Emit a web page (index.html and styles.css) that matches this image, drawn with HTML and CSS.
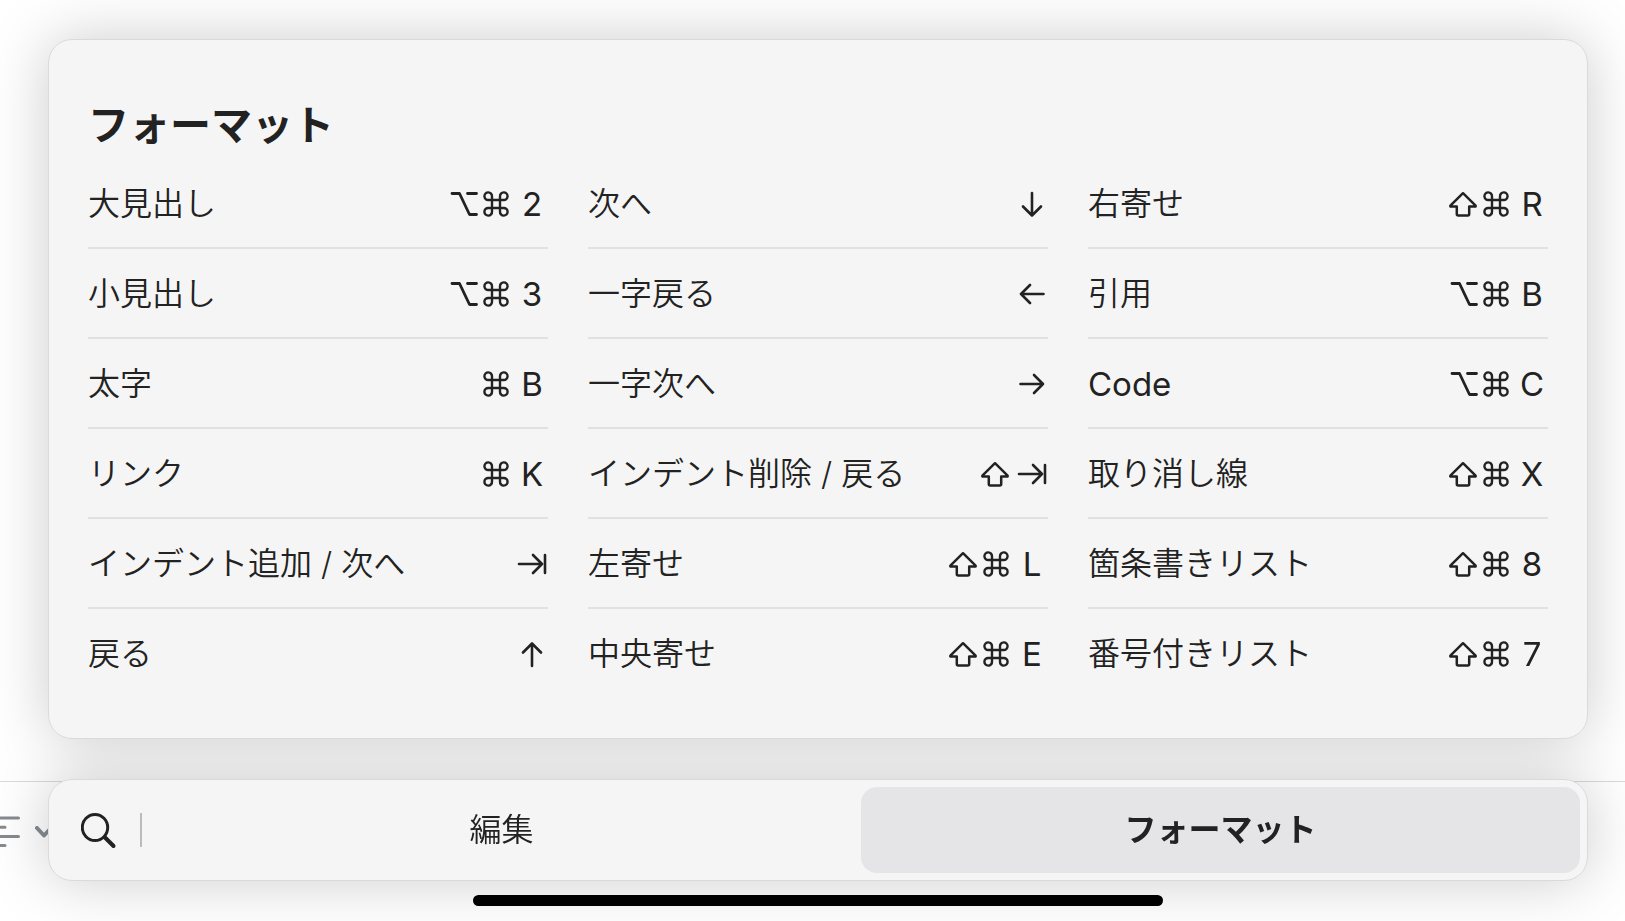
FILE: index.html
```
<!DOCTYPE html>
<html lang="ja">
<head>
  <meta charset="UTF-8" />
  <title>フォーマット</title>
  <meta name="viewport" content="width=device-width, initial-scale=1.0"/>
  <link rel="stylesheet" href="styles.css">
</head>
<body>
  <!-- key symbols -->
  <svg class="sprite" aria-hidden="true">
    <symbol id="cmd" viewBox="0 0 32 32">
      <path stroke-width="2.400" d="M12 12V8.500A3.800 3.800 0 1 0 8.500 12H23.500A3.800 3.800 0 1 0 20 8.500V23.500A3.800 3.800 0 1 0 23.500 20H8.500A3.800 3.800 0 1 0 12 23.500Z"/>
    </symbol>
    <symbol id="opt" viewBox="0 0 32 32">
      <path stroke-width="2.800" d="M4 5.500H11.500L21.500 26.500H28.500M19.500 5.500H28.500"/>
    </symbol>
    <symbol id="shift" viewBox="0 0 32 32">
      <path stroke-width="2.500" d="M15 5.200L27.600 17.600Q28 18.600 27 18.600H21.200V26Q21.200 27.400 19.800 27.400H10.200Q8.800 27.400 8.800 26V18.600H3Q2 18.600 2.400 17.600Z"/>
    </symbol>
    <symbol id="down" viewBox="0 0 32 32">
      <path stroke-width="2.600" d="M16 5V27.500M7 18.500L16 27.500L25 18.500"/>
    </symbol>
    <symbol id="up" viewBox="0 0 32 32">
      <path stroke-width="2.600" d="M16 28V5.500M7 14.500L16 5.500L25 14.500"/>
    </symbol>
    <symbol id="left" viewBox="0 0 32 32">
      <path stroke-width="2.600" d="M27.500 16H5M14 7L5 16L14 25"/>
    </symbol>
    <symbol id="right" viewBox="0 0 32 32">
      <path stroke-width="2.600" d="M4.500 16H27M18 7L27 16L18 25"/>
    </symbol>
    <symbol id="tab" viewBox="0 0 32 32">
      <path stroke-width="2.600" d="M3 16H26M17 7L26 16L17 25M29 7V25"/>
    </symbol>
  </svg>

  <div class="toolbar">
    <button class="tool" aria-label="配置">
      <svg width="21" height="32" viewBox="0 0 21 32"><path d="M0 3H18.500M0 12.200H5M0 21.400H18.500M0 30.500H5"/></svg>
    </button>
    <button class="tool chevron" aria-label="メニュー">
      <svg width="18" height="12" viewBox="0 0 18 12"><path d="M2 2L9 9.500L16 2"/></svg>
    </button>
  </div>

  <div class="overlay">
    <main class="panel">
      <h1>フォーマット</h1>
      <ul class="commands">
        <li><button>大見出し <kbd><svg><use href="#opt"/></svg><svg><use href="#cmd"/></svg><span>2</span></kbd></button></li>
        <li><button>小見出し <kbd><svg><use href="#opt"/></svg><svg><use href="#cmd"/></svg><span>3</span></kbd></button></li>
        <li><button>太字 <kbd><svg><use href="#cmd"/></svg><span>B</span></kbd></button></li>
        <li><button>リンク <kbd><svg><use href="#cmd"/></svg><span>K</span></kbd></button></li>
        <li><button>インデント追加 / 次へ <kbd><span><svg><use href="#tab"/></svg></span></kbd></button></li>
        <li><button>戻る <kbd><span><svg><use href="#up"/></svg></span></kbd></button></li>

        <li><button>次へ <kbd><span><svg><use href="#down"/></svg></span></kbd></button></li>
        <li><button>一字戻る <kbd><span><svg><use href="#left"/></svg></span></kbd></button></li>
        <li><button>一字次へ <kbd><span><svg><use href="#right"/></svg></span></kbd></button></li>
        <li><button>インデント削除 / 戻る <kbd><svg><use href="#shift"/></svg><span><svg><use href="#tab"/></svg></span></kbd></button></li>
        <li><button>左寄せ <kbd><svg><use href="#shift"/></svg><svg><use href="#cmd"/></svg><span>L</span></kbd></button></li>
        <li><button>中央寄せ <kbd><svg><use href="#shift"/></svg><svg><use href="#cmd"/></svg><span>E</span></kbd></button></li>

        <li><button>右寄せ <kbd><svg><use href="#shift"/></svg><svg><use href="#cmd"/></svg><span>R</span></kbd></button></li>
        <li><button>引用 <kbd><svg><use href="#opt"/></svg><svg><use href="#cmd"/></svg><span>B</span></kbd></button></li>
        <li><button class="latin">Code <kbd><svg><use href="#opt"/></svg><svg><use href="#cmd"/></svg><span>C</span></kbd></button></li>
        <li><button>取り消し線 <kbd><svg><use href="#shift"/></svg><svg><use href="#cmd"/></svg><span>X</span></kbd></button></li>
        <li><button>箇条書きリスト <kbd><svg><use href="#shift"/></svg><svg><use href="#cmd"/></svg><span>8</span></kbd></button></li>
        <li><button>番号付きリスト <kbd><svg><use href="#shift"/></svg><svg><use href="#cmd"/></svg><span>7</span></kbd></button></li>
      </ul>
    </main>

    <nav class="tabs">
      <button class="search" aria-label="検索">
        <svg width="36" height="36" viewBox="0 0 36 36">
          <ellipse cx="14" cy="14.500" rx="12.700" ry="13"/>
          <path d="M24 24.500L32.500 33"/>
        </svg>
      </button>
      <button class="tab">編集</button>
      <button class="tab active">フォーマット</button>
    </nav>
  </div>

  <div class="home-bar"></div>
</body>
</html>
```
FILE: styles.css
```
:root {
  --text: #222;
  --panel: #f5f5f5;
  --border: #dadada;
  --line: #e1e1e1;
  --active: #e5e5e7;
  --tool: #858b8f;
}

* {
  box-sizing: border-box;
  margin: 0;
  padding: 0;
}

body {
  position: relative;
  min-height: 100vh;
  padding: 39px 37px 15px 48px;
  background: #fff;
  color: var(--text);
  font-family: Inter, "Noto Sans CJK JP", sans-serif;
  font-size: 32px;
  font-weight: 350;
  line-height: 40px;
  overflow: hidden;
}

button {
  border: none;
  background: none;
  color: inherit;
  font: inherit;
  cursor: pointer;
}

svg {
  display: block;
  fill: none;
  stroke: currentColor;
  stroke-linecap: round;
  stroke-linejoin: round;
}

.sprite {
  position: absolute;
  width: 0;
  height: 0;
}

/* editor toolbar, sits under the overlay */
.toolbar {
  position: absolute;
  left: 0;
  right: 0;
  bottom: 0;
  height: 140px;
  display: flex;
  align-items: flex-start;
  gap: 14px;
  padding-top: 33px;
  border-top: 1px solid var(--border);
  color: var(--tool);
}

.tool svg {
  stroke-width: 3;
}

.chevron {
  padding-top: 11px;
}

.chevron svg {
  stroke-width: 4;
}

.overlay {
  position: relative;
  display: flex;
  flex-direction: column;
  gap: 40px;
  filter: drop-shadow(0 0 30px rgba(0, 0, 0, 0.2));
}

.panel {
  padding: 55px 39px 39px;
  background: var(--panel);
  border: 1px solid var(--border);
  border-radius: 24px;
}

h1 {
  margin-bottom: 4px;
  font-size: 41px;
  font-weight: 700;
  line-height: 60px;
}

.commands {
  display: grid;
  grid-template-columns: repeat(3, 1fr);
  grid-template-rows: repeat(6, 90px);
  grid-auto-flow: column;
  column-gap: 40px;
  list-style: none;
}

.commands li {
  border-bottom: 2px solid var(--line);
}

.commands li:nth-child(6n) {
  border-bottom-color: transparent;
}

.commands button {
  display: flex;
  justify-content: space-between;
  align-items: center;
  width: 100%;
  height: 100%;
  padding-top: 2px;
  white-space: nowrap;
}

.commands .latin {
  font-size: 33px;
  font-weight: 400;
}

kbd {
  display: flex;
  align-items: center;
  font-family: Inter, sans-serif;
  font-size: 33px;
  font-weight: 400;
}

kbd svg {
  width: 32px;
  height: 32px;
}

kbd span {
  width: 32px;
  margin-left: 4px;
  text-align: center;
}

.tabs {
  display: flex;
  align-items: center;
  padding: 7px;
  padding-left: 0;
  background: var(--panel);
  border: 1px solid var(--border);
  border-radius: 24px;
}

.search {
  width: 93px;
  height: 34px;
  padding-left: 32px;
  border-right: 2px solid #bbb;
}

.search svg {
  stroke-width: 3;
}

.search path {
  stroke-width: 4;
}

.tab {
  flex: 1;
  height: 86px;
  border-radius: 16px;
}

.tab.active {
  background: var(--active);
  font-weight: 700;
}

.home-bar {
  position: relative;
  width: 690px;
  max-width: 60%;
  height: 11px;
  margin: 14px auto 0;
  border-radius: 6px;
  background: #000;
}
```
